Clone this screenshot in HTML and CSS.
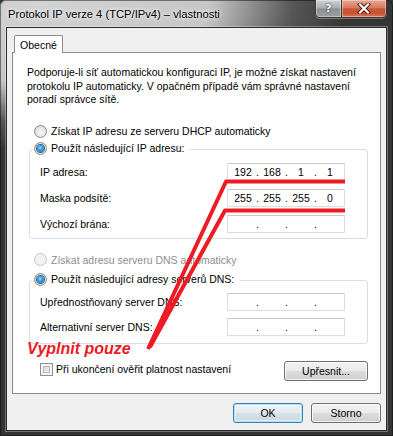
FILE: index.html
```html
<!DOCTYPE html>
<html lang="cs">
<head>
    <meta charset="UTF-8">
    <title>Protokol IP verze 4 (TCP/IPv4) – vlastnosti</title>
    <link rel="stylesheet" href="styles.css">
</head>
<body>
    <div class="window">
        <!-- Title bar -->
        <div class="titlebar">
            <div class="title">Protokol IP verze 4 (TCP/IPv4) – vlastnosti</div>
            <div class="caption-buttons">
                <div class="cap-btn help">?</div>
                <div class="cap-btn close">
                    <svg width="14" height="11" viewBox="0 0 14 11">
                        <path d="M3 1.5 L11 9.5 M11 1.5 L3 9.5" stroke="#4a1608" stroke-width="4" stroke-linecap="square"/>
                        <path d="M3 1.5 L11 9.5 M11 1.5 L3 9.5" stroke="#ffffff" stroke-width="2.2" stroke-linecap="square"/>
                    </svg>
                </div>
            </div>
        </div>

        <!-- Client area -->
        <div class="client">
            <div class="tabs">
                <div class="tab">Obecné</div>
            </div>

            <div class="panel">
                <p class="intro">Podporuje-li síť automatickou konfiguraci IP, je možné získat nastavení protokolu IP automaticky. V opačném případě vám správné nastavení poradí správce sítě.</p>

                <div class="option first-option">
                    <span class="radio"></span>
                    <span>Získat IP adresu ze serveru DHCP automaticky</span>
                </div>

                <div class="group ip-group">
                    <div class="group-title">
                        <span class="radio checked"></span>
                        <span>Použít následující IP adresu:</span>
                    </div>
                    <div class="rows">
                        <div class="row">
                            <span class="label">IP adresa:</span>
                            <div class="ipbox">
                                <span class="seg">192</span><span class="dot">.</span><span class="seg">168</span><span class="dot">.</span><span class="seg">1</span><span class="dot">.</span><span class="seg">1</span>
                            </div>
                        </div>
                        <div class="row">
                            <span class="label">Maska podsítě:</span>
                            <div class="ipbox">
                                <span class="seg">255</span><span class="dot">.</span><span class="seg">255</span><span class="dot">.</span><span class="seg">255</span><span class="dot">.</span><span class="seg">0</span>
                            </div>
                        </div>
                        <div class="row">
                            <span class="label">Výchozí brána:</span>
                            <div class="ipbox">
                                <span class="seg"></span><span class="dot">.</span><span class="seg"></span><span class="dot">.</span><span class="seg"></span><span class="dot">.</span><span class="seg"></span>
                            </div>
                        </div>
                    </div>
                </div>

                <div class="option disabled dns-auto">
                    <span class="radio"></span>
                    <span>Získat adresu serveru DNS automaticky</span>
                </div>

                <div class="group dns-group">
                    <div class="group-title">
                        <span class="radio checked"></span>
                        <span>Použít následující adresy serverů DNS:</span>
                    </div>
                    <div class="rows dns-rows">
                        <div class="row">
                            <span class="label">Upřednostňovaný server DNS:</span>
                            <div class="ipbox">
                                <span class="seg"></span><span class="dot">.</span><span class="seg"></span><span class="dot">.</span><span class="seg"></span><span class="dot">.</span><span class="seg"></span>
                            </div>
                        </div>
                        <div class="row">
                            <span class="label">Alternativní server DNS:</span>
                            <div class="ipbox">
                                <span class="seg"></span><span class="dot">.</span><span class="seg"></span><span class="dot">.</span><span class="seg"></span><span class="dot">.</span><span class="seg"></span>
                            </div>
                        </div>
                    </div>
                </div>

                <div class="bottom-row">
                    <div class="check-option">
                        <span class="checkbox"></span>
                        <span>Při ukončení ověřit platnost nastavení</span>
                    </div>
                    <div class="button advanced">Upřesnit...</div>
                </div>
            </div>

            <div class="dialog-buttons">
                <div class="button default">OK</div>
                <div class="button">Storno</div>
            </div>
        </div>

        <!-- Red hand-drawn annotation over the dialog -->
        <svg class="annotation" width="393" height="436" viewBox="0 0 393 436">
            <polyline points="345,181.5 226,181.5 148,349" fill="none" stroke="#ed1c24" stroke-width="4" stroke-linejoin="round"/>
            <polyline points="345,210.5 225,210.5 150,347" fill="none" stroke="#ed1c24" stroke-width="4" stroke-linejoin="round"/>
        </svg>
        <div class="note">Vyplnit pouze</div>
    </div>
</body>
</html>
```

FILE: styles.css
```css
* {
    box-sizing: border-box;
    margin: 0;
    padding: 0;
}

body {
    width: 393px;
    height: 436px;
    overflow: hidden;
    background-color: #333333;
    font-family: "Liberation Sans", Arial, sans-serif;
    font-size: 10.5px;
    color: #000000;
}

.window {
    position: relative;
    width: 393px;
    height: 436px;
    display: flex;
    flex-direction: column;
    padding: 0 6px 5px 6px;
    border-radius: 6px 6px 0 0;
    background:
        radial-gradient(ellipse 310px 150px at 40px 0, #d3d3d3 0%, #c6c6c6 55%, #555555 82%, #353535 100%),
        #353535;
    box-shadow: inset 0 0 0 1px rgba(0, 0, 0, 0.45);
}

/* Title bar */

.titlebar {
    height: 27px;
    display: flex;
    justify-content: space-between;
    align-items: flex-start;
}

.title {
    margin: 8px 0 0 2px;
    font-size: 11.2px;
    line-height: 13px;
    color: #000000;
    text-shadow: 0 0 6px #ffffff, 0 0 3px #f4f4f4;
}

.caption-buttons {
    display: flex;
    height: 18px;
    border: 1px solid #3a3a3a;
    border-top: none;
    border-radius: 0 0 5px 5px;
    overflow: hidden;
    box-shadow: 0 1px 0 rgba(255, 255, 255, 0.3);
}

.cap-btn {
    display: flex;
    justify-content: center;
    align-items: center;
    height: 100%;
    box-shadow: inset 0 0 0 1px rgba(255, 255, 255, 0.35);
}

.help {
    width: 26px;
    border-right: 1px solid #3a3a3a;
    background: linear-gradient(#cfd2d6 0%, #a9acb1 48%, #8c8f94 52%, #9a9da2 100%);
    font-family: "DejaVu Sans", sans-serif;
    font-size: 11px;
    font-weight: 700;
    color: #ffffff;
    text-shadow: 0 0 2px #303030, 0 0 1px #303030;
}

.close {
    width: 44px;
    background: linear-gradient(#e6a896 0%, #d87a62 45%, #c75639 52%, #c9532f 78%, #dc7a5e 100%);
}

/* Client area */

.client {
    flex: 1;
    display: flex;
    flex-direction: column;
    padding: 7px 5px 7px 5px;
    background-color: #f0f0f0;
    border: 1px solid #2c2c2c;
    box-shadow: 0 0 0 1px rgba(255, 255, 255, 0.3);
}

.tabs {
    display: flex;
    height: 18px;
    padding-left: 2px;
    margin-bottom: -1px;
    position: relative;
    z-index: 1;
}

.tab {
    width: 49px;
    height: 18px;
    display: flex;
    justify-content: center;
    align-items: center;
    background-color: #ffffff;
    border: 1px solid #898c95;
    border-bottom: none;
    border-radius: 2px 2px 0 0;
}

.panel {
    flex: 1;
    display: flex;
    flex-direction: column;
    background-color: #ffffff;
    border: 1px solid #898c95;
    padding: 13px 12px 0 14px;
}

.intro {
    line-height: 13.5px;
}

/* Radio and check options */

.option {
    display: flex;
    align-items: center;
    gap: 4px;
    height: 15px;
    margin-left: 7px;
}

.first-option {
    margin-top: 17px;
}

.dns-auto {
    margin-top: 13px;
}

.disabled {
    color: #8d8d8d;
}

.radio {
    width: 13px;
    height: 13px;
    flex: 0 0 13px;
    border-radius: 50%;
    border: 1px solid #8a8b8c;
    background: radial-gradient(circle at 55% 60%, #f8f8f8 0%, #e4e4e4 55%, #cfcfcf 100%);
    display: flex;
    justify-content: center;
    align-items: center;
}

.radio.checked::after {
    content: "";
    width: 7px;
    height: 7px;
    border-radius: 50%;
    background: radial-gradient(circle at 45% 40%, #9bdcfb 0%, #3e9ce0 40%, #1a5a96 100%);
    box-shadow: 0 0 0 1px #2c5e8c;
}

.disabled .radio {
    border-color: #c2c3c5;
    background: #f2f2f2;
}

.checkbox {
    width: 13px;
    height: 13px;
    flex: 0 0 13px;
    border: 1px solid #8e8f8f;
    background-color: #ffffff;
    box-shadow: inset 0 0 0 2px #f4f4f4, inset 0 0 0 3px #b7b8ba;
    background-image: linear-gradient(135deg, #d6d6d6 0%, #f6f6f6 100%);
    background-clip: content-box;
    padding: 2px;
}

/* Group boxes */

.group {
    border: 1px solid #d5dfe5;
    border-radius: 3px;
    margin-left: 2px;
    padding: 0 22px 5px 10px;
}

.ip-group {
    margin-top: 10.5px;
}

.dns-group {
    margin-top: 13px;
    padding-bottom: 7px;
}

.group-title {
    display: flex;
    width: max-content;
    align-items: center;
    gap: 4px;
    height: 15px;
    margin: -9.5px 0 0 -7px;
    padding: 0 6px 0 1px;
    background-color: #ffffff;
}

.rows {
    display: flex;
    flex-direction: column;
    gap: 8px;
    margin-top: 7.5px;
}

.dns-rows {
    gap: 7px;
    margin-top: 6.5px;
}

.row {
    display: flex;
    align-items: center;
    justify-content: space-between;
    height: 18px;
}

.ipbox {
    width: 118px;
    height: 18px;
    display: flex;
    align-items: center;
    padding-left: 2px;
    background-color: #ffffff;
    border: 1px solid #dcdde0;
    border-top-color: #c6c8cc;
}

.seg {
    width: 26px;
    text-align: center;
}

.dot {
    width: 3px;
    text-align: center;
}

/* Bottom of the tab page */

.bottom-row {
    display: flex;
    justify-content: space-between;
    align-items: center;
    margin-top: 17px;
}

.check-option {
    display: flex;
    align-items: center;
    gap: 3px;
    margin-left: 13px;
    margin-top: -4px;
}

.button {
    height: 20px;
    display: flex;
    justify-content: center;
    align-items: center;
    border: 1px solid #707070;
    border-radius: 3px;
    background: linear-gradient(#f2f2f2 0%, #ebebeb 48%, #dddddd 52%, #cfcfcf 100%);
    box-shadow: inset 0 0 0 1px rgba(255, 255, 255, 0.75);
}

.advanced {
    width: 84px;
}

.dialog-buttons {
    display: flex;
    justify-content: flex-end;
    gap: 8px;
    margin-top: 9px;
}

.dialog-buttons .button {
    width: 70px;
}

.button.default {
    border-color: #3c7fb1;
    box-shadow: inset 0 0 0 1px #a8e5fa, inset 0 0 0 2px rgba(255, 255, 255, 0.5);
    background: linear-gradient(#eef4f8 0%, #e4ecf1 48%, #d7e1e8 52%, #cbd6de 100%);
}

/* Annotation drawn over the screenshot */

.annotation {
    position: absolute;
    top: 0;
    left: 0;
    pointer-events: none;
}

.note {
    position: absolute;
    left: 27px;
    top: 341px;
    font-size: 16px;
    line-height: 16px;
    font-weight: 700;
    font-style: italic;
    color: #ed1c24;
}
```
